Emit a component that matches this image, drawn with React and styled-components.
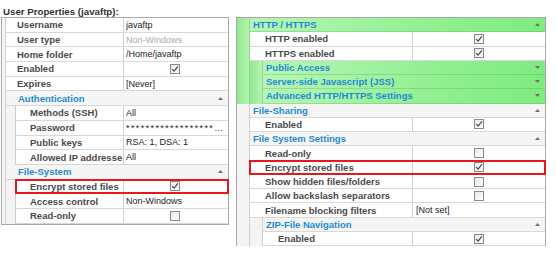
import React from 'react';
import styled, { createGlobalStyle } from 'styled-components';

const Global = createGlobalStyle`
  html, body { margin: 0; padding: 0; background: #fff; }
  body { font-family: "Liberation Sans", Arial, sans-serif; }
`;

const Page = styled.div`
  display: flex;
  align-items: flex-start;
  width: 556px;
  height: 257px;
  overflow: hidden;
`;

const LeftCol = styled.div`
  width: 228px;
  padding-left: 1px;
  display: flex;
  flex-direction: column;
`;

const RightCol = styled.div`
  width: 310px;
  margin-left: 7px;
  padding-top: 17px;
`;

const Title = styled.div`
  height: 11px;
  padding-top: 6px;
  padding-left: 2px;
  line-height: 11px;
  font-size: 9.7px;
  font-weight: bold;
  color: #333;
  white-space: nowrap;
`;

const Panel = styled.div`
  box-sizing: border-box;
  width: 100%;
  border: 1px solid #a8a8a8;
  border-bottom: ${p => (p.$open ? 'none' : '1px solid #a8a8a8')};
  background: #fff;
`;

const Row = styled.div`
  display: flex;
  height: ${p => p.$h}px;
`;

const Gutter = styled.div`
  flex: none;
  width: ${p => p.$w}px;
  border-right: 1px solid ${p => (p.$green ? '#8fd98f' : '#cfcfcf')};
  background: ${p =>
    p.$green ? 'linear-gradient(to right, #92e892, #b4f4b4)' : '#f4f4f4'};
`;

const Body = styled.div`
  position: relative;
  flex: 1;
  min-width: 0;
  display: flex;
  align-items: stretch;
  box-sizing: border-box;
  border-bottom: 1px solid ${p => (p.$green ? 'rgba(60,150,60,0.25)' : '#d8d8d8')};
  background: ${p =>
    p.$cat
      ? p.$green
        ? 'linear-gradient(to right, #b6f6b6 0%, #95f095 55%, #7eec7e 100%)'
        : '#f5f5f5'
      : '#fff'};
`;

const Label = styled.div`
  flex: 1;
  min-width: 0;
  overflow: hidden;
  white-space: nowrap;
  padding-left: ${p => p.$pad}px;
  font-size: 9.5px;
  font-weight: bold;
  color: #4a4a4a;
  display: flex;
  align-items: center;
`;

const CatLabel = styled.div`
  flex: 1;
  min-width: 0;
  white-space: nowrap;
  padding-left: ${p => p.$pad}px;
  font-size: 9.5px;
  font-weight: bold;
  color: #1f8ad6;
  display: flex;
  align-items: center;
`;

const Arrow = styled.div`
  flex: none;
  width: 5px;
  margin-right: 5px;
  display: flex;
  align-items: center;
`;

const Value = styled.div`
  flex: none;
  width: ${p => p.$w}px;
  box-sizing: border-box;
  border-left: 1px solid #d0d0d0;
  padding-left: ${p => p.$pad}px;
  padding-right: 4px;
  display: flex;
  align-items: center;
  justify-content: ${p => (p.$center ? 'center' : 'flex-start')};
  font-size: 9px;
  color: ${p => (p.$muted ? '#a9a9a9' : '#1c1c1c')};
  white-space: nowrap;
  overflow: hidden;
`;

const ValueText = styled.span`
  display: block;
  overflow: hidden;
  text-overflow: ellipsis;
  white-space: nowrap;
  min-width: 0;
  letter-spacing: ${p => (p.$spaced ? '1.4px' : 'normal')};
`;

const Highlight = styled.div`
  position: absolute;
  left: -1px;
  right: -1px;
  top: -1px;
  bottom: -1px;
  border: 2px solid #e8161d;
  z-index: 2;
  pointer-events: none;
`;

const CheckBox = ({ checked }) => (
  <svg width="10" height="10" viewBox="0 0 10 10">
    <defs>
      <linearGradient id="cbg" x1="0" y1="0" x2="1" y2="1">
        <stop offset="0" stopColor="#e8e8e8" />
        <stop offset="1" stopColor="#ffffff" />
      </linearGradient>
    </defs>
    <rect x="0.5" y="0.5" width="9" height="9" fill="url(#cbg)" stroke="#8a8a8a" />
    {checked && (
      <path d="M2.2 5.2 L4.1 7.2 L7.9 2.4" fill="none" stroke="#474747" strokeWidth="1.2" />
    )}
  </svg>
);

const Tri = ({ up }) => (
  <svg width="5" height="3" viewBox="0 0 5 3">
    <path d={up ? 'M0 3 L2.5 0 L5 3 Z' : 'M0 0 L2.5 3 L5 0 Z'} fill="#707070" />
  </svg>
);

const leftRows = [
  { t: 'row', label: 'Username', value: 'javaftp' },
  { t: 'row', label: 'User type', value: 'Non-Windows', muted: true },
  { t: 'row', label: 'Home folder', value: '/Home/javaftp' },
  { t: 'row', label: 'Enabled', check: true },
  { t: 'row', label: 'Expires', value: '[Never]' },
  { t: 'cat', label: 'Authentication', open: true },
  { t: 'row', level: 1, label: 'Methods (SSH)', value: 'All' },
  { t: 'row', level: 1, label: 'Password', value: '*'.repeat(30), spaced: true },
  { t: 'row', level: 1, label: 'Public keys', value: 'RSA: 1, DSA: 1' },
  { t: 'row', level: 1, label: 'Allowed IP addresses', value: 'All' },
  { t: 'cat', label: 'File-System', open: true },
  { t: 'row', level: 1, label: 'Encrypt stored files', check: true, hl: true },
  { t: 'row', level: 1, label: 'Access control', value: 'Non-Windows' },
  { t: 'row', level: 1, label: 'Read-only', check: false },
];

const rightRows = [
  { t: 'cat', label: 'HTTP / HTTPS', open: true, green: true },
  { t: 'row', label: 'HTTP enabled', check: true, green: true },
  { t: 'row', label: 'HTTPS enabled', check: true, green: true },
  { t: 'cat', level: 1, label: 'Public Access', green: true },
  { t: 'cat', level: 1, label: 'Server-side Javascript (JSS)', green: true },
  { t: 'cat', level: 1, label: 'Advanced HTTP/HTTPS Settings', green: true },
  { t: 'cat', label: 'File-Sharing', open: true },
  { t: 'row', label: 'Enabled', check: true },
  { t: 'cat', label: 'File System Settings', open: true },
  { t: 'row', label: 'Read-only', check: false },
  { t: 'row', label: 'Encrypt stored files', check: true, hl: true },
  { t: 'row', label: 'Show hidden files/folders', check: false },
  { t: 'row', label: 'Allow backslash separators', check: false },
  { t: 'row', label: 'Filename blocking filters', value: '[Not set]' },
  { t: 'cat', level: 1, label: 'ZIP-File Navigation', open: true },
  { t: 'row', level: 1, label: 'Enabled', check: true },
];

const PropertyGrid = ({ rows, cfg, open }) => (
  <Panel $open={open}>
    {rows.map((r, i) => {
      const level = r.level || 0;
      const gutters = cfg.gutters.slice(0, level + 1);
      return (
        <Row key={i} $h={cfg.rowH}>
          {gutters.map((w, gi) => (
            <Gutter key={gi} $w={w} $green={r.green} />
          ))}
          {r.t === 'cat' ? (
            <Body $cat $green={r.green}>
              <CatLabel $pad={cfg.catPad[level]}>{r.label}</CatLabel>
              <Arrow>
                <Tri up={r.open} />
              </Arrow>
            </Body>
          ) : (
            <Body>
              <Label $pad={cfg.labelPad[level]}>{r.label}</Label>
              <Value
                $w={cfg.valueW}
                $pad={cfg.valuePad}
                $center={r.check !== undefined}
                $muted={r.muted}
              >
                {r.check !== undefined ? (
                  <CheckBox checked={r.check} />
                ) : (
                  <ValueText $spaced={r.spaced}>{r.value}</ValueText>
                )}
              </Value>
              {r.hl && <Highlight />}
            </Body>
          )}
        </Row>
      );
    })}
  </Panel>
);

const leftCfg = {
  rowH: 14.7,
  gutters: [3, 9],
  labelPad: [11, 14],
  catPad: [12, 3],
  valueW: 105,
  valuePad: 2,
};

const rightCfg = {
  rowH: 14.27,
  gutters: [12, 12],
  labelPad: [15, 15],
  catPad: [3, 3],
  valueW: 133,
  valuePad: 3,
};

export default function App() {
  return (
    <>
      <Global />
      <Page>
        <LeftCol>
          <Title>User Properties (javaftp):</Title>
          <PropertyGrid rows={leftRows} cfg={leftCfg} />
        </LeftCol>
        <RightCol>
          <PropertyGrid rows={rightRows} cfg={rightCfg} open />
        </RightCol>
      </Page>
    </>
  );
}
